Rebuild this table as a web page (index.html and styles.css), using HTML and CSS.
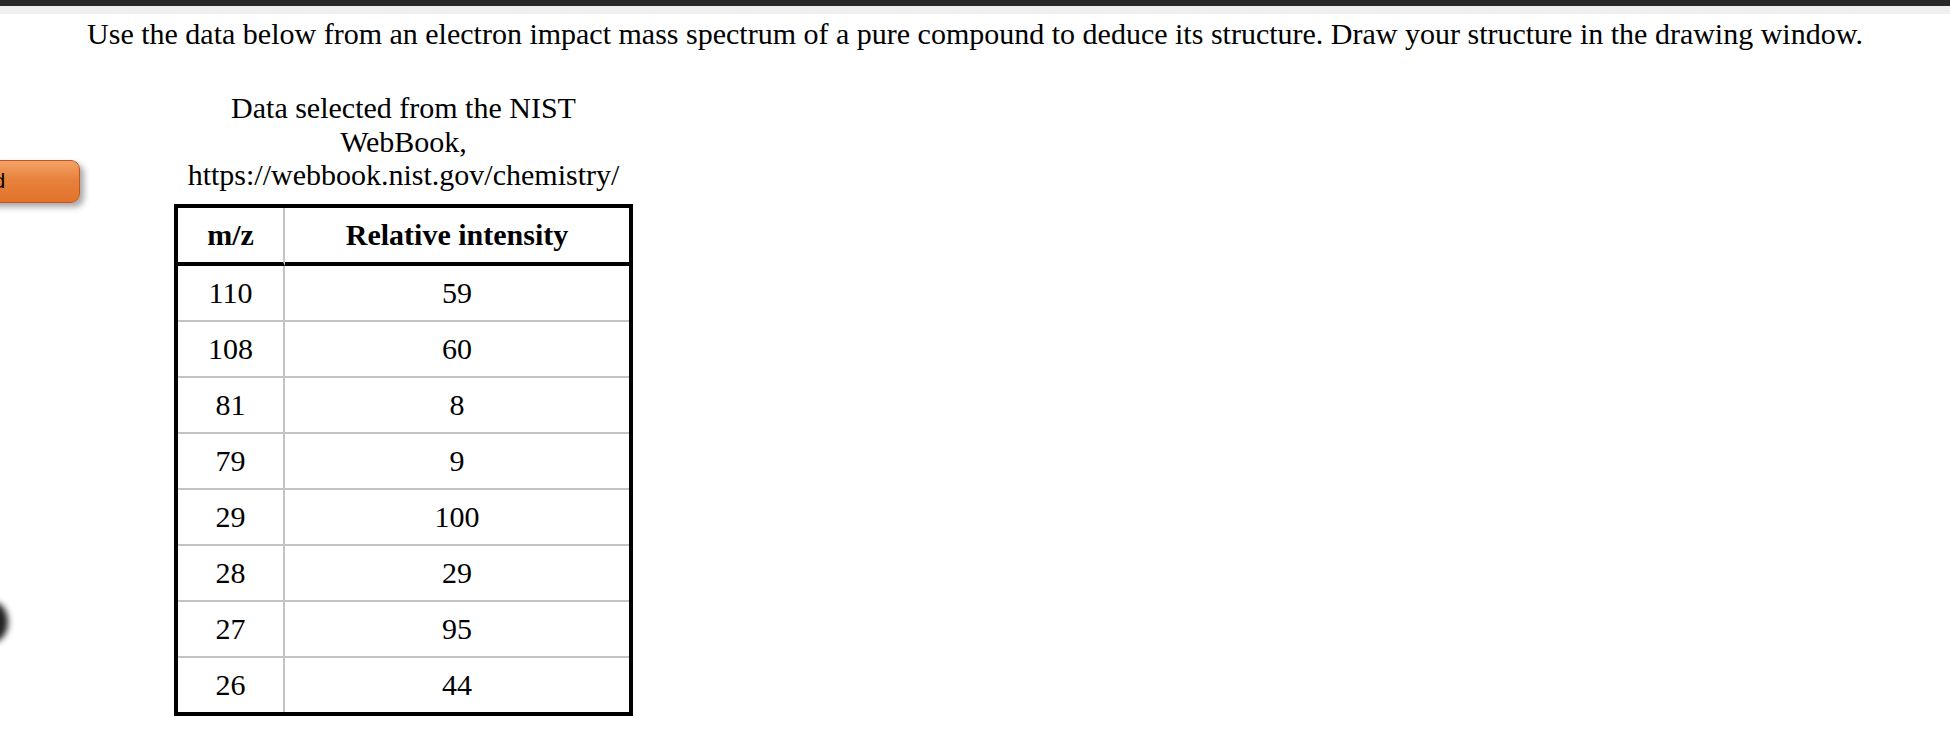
FILE: index.html
```html
<!DOCTYPE html>
<html>
<head>
<meta charset="utf-8">
<link rel="stylesheet" href="styles.css">
</head>
<body>
<div class="topbar"></div>
<div class="subbar"></div>
<div class="side-button"><span class="side-button-text">d</span></div>
<div class="side-dot"></div>
<main class="content">
  <p class="question">Use the data below from an electron impact mass spectrum of a pure compound to deduce its structure. Draw your structure in the drawing window.</p>
  <table class="ms-table">
    <caption class="ms-caption">Data selected from the NIST WebBook, https://webbook.nist.gov/chemistry/</caption>
    <thead>
      <tr><th class="col-mz">m/z</th><th class="col-int">Relative intensity</th></tr>
    </thead>
    <tbody>
      <tr><td class="col-mz">110</td><td class="col-int">59</td></tr>
      <tr><td class="col-mz">108</td><td class="col-int">60</td></tr>
      <tr><td class="col-mz">81</td><td class="col-int">8</td></tr>
      <tr><td class="col-mz">79</td><td class="col-int">9</td></tr>
      <tr><td class="col-mz">29</td><td class="col-int">100</td></tr>
      <tr><td class="col-mz">28</td><td class="col-int">29</td></tr>
      <tr><td class="col-mz">27</td><td class="col-int">95</td></tr>
      <tr><td class="col-mz">26</td><td class="col-int">44</td></tr>
    </tbody>
  </table>
</main>
</body>
</html>
```
FILE: styles.css
```css
html, body {
  margin: 0;
  padding: 0;
  background: #ffffff;
}
body {
  font-family: "Liberation Serif", "Times New Roman", serif;
  color: #000;
  overflow: hidden;
  height: 740px;
  position: relative;
}
.topbar {
  height: 6px;
  background: #28292b;
}
.subbar {
  height: 8px;
  background: #f0f0f0;
}
.content {
  padding: 0;
}
.question {
  margin: 3px 0 0 0;
  font-size: 30px;
  line-height: 33px;
  text-align: center;
}
.ms-table {
  margin: 41px 0 0 174px;
  border: 4px solid #000;
  border-spacing: 0;
  font-size: 30px;
  text-align: center;
}
.ms-caption {
  font-size: 30px;
  line-height: 33.5px;
  padding-bottom: 12px;
  text-align: center;
}
.ms-table th,
.ms-table td {
  padding: 0;
  height: 54px;
  vertical-align: middle;
  border-bottom: 2px solid #c4c4c4;
}
.ms-table th {
  font-weight: bold;
  border-bottom: 4px solid #000;
}
.ms-table tbody tr:last-child td {
  border-bottom: none;
}
.col-mz {
  width: 105px;
  border-right: 2px solid #c4c4c4;
}
.col-int {
  width: 344px;
}
.side-button {
  position: absolute;
  left: -40px;
  top: 160px;
  width: 118px;
  height: 41px;
  border: 1px solid #c2561c;
  border-radius: 9px;
  background: linear-gradient(#f3a468 0%, #e8813c 45%, #e2732c 100%);
  box-shadow: 4px 4px 6px rgba(0, 0, 0, 0.35);
  font-family: "Liberation Sans", Arial, sans-serif;
  font-size: 20px;
  line-height: 41px;
}
.side-button-text {
  display: block;
  width: 44px;
  text-align: right;
}
.side-dot {
  position: absolute;
  left: -22px;
  top: 602px;
  width: 30px;
  height: 40px;
  border-radius: 50%;
  background: #222;
  filter: blur(3px);
}
```
